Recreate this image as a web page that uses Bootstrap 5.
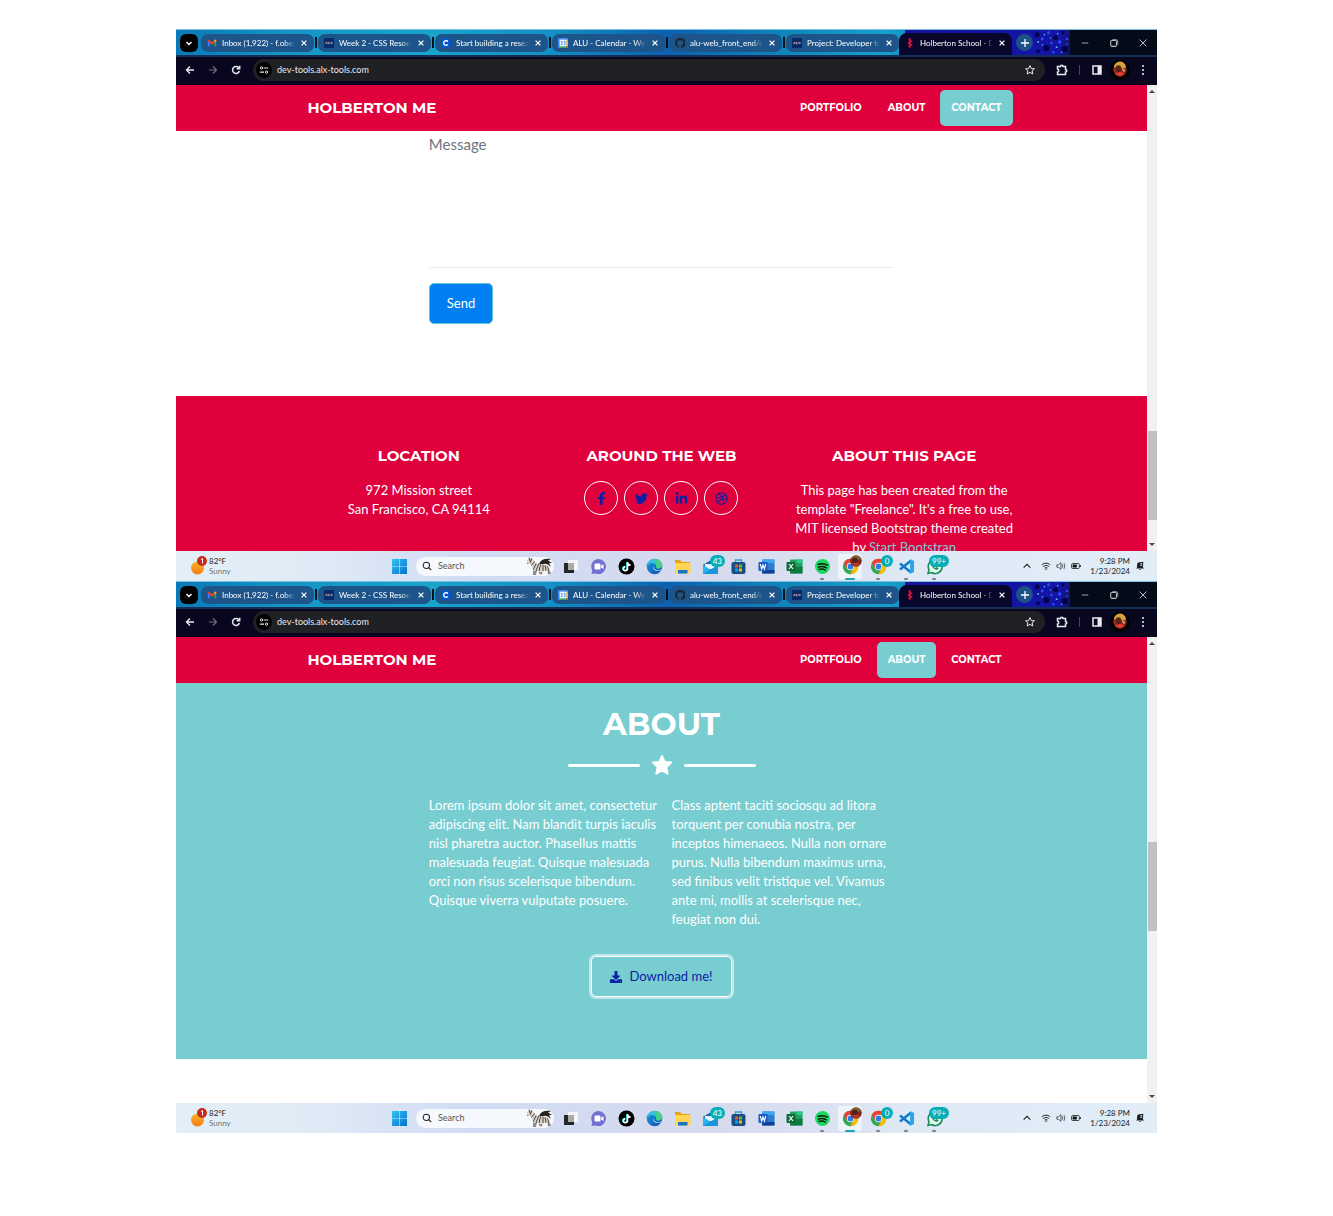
<!DOCTYPE html>
<html lang="en">
<head>
<meta charset="utf-8">
<meta name="viewport" content="width=device-width, initial-scale=1">
<title>Holberton School - Developer tools</title>
<link href="https://cdn.jsdelivr.net/npm/bootstrap@5.3.0/dist/css/bootstrap.min.css" rel="stylesheet">
<style>
:root{--crimson:#e0003c;--teal:#78cdd1;--ink:#0b1fa6;--ui:Lato,"Noto Sans",sans-serif;--head:Montserrat,Inter,sans-serif}
body{font-family:Lato,sans-serif;font-size:13px;line-height:19px;background:#fff;color:#212529}
.shots{max-width:981px;padding-top:29px;padding-bottom:83px}
.ico{display:block;flex:none;width:12px;height:12px}
button{border:0;background:none;padding:0;color:inherit}
/* browser frame */
.tabstrip{height:26px;padding-left:4px;font:8px/12px var(--ui);color:#fff;border-top:1px solid #7cc0e0;
 background:linear-gradient(100deg,#0a78b8 0,#1496c4 12%,#19a4cc 26%,#1390c4 38%,#0c60b0 50%,#0f86bb 62%,#18a0cb 72%,#1793c5 74%,#14159a 74%,#1414a8 90%,#071018 92%,#03151a 100%)}
.menu-btn{width:18px;height:18px;border-radius:6px;background:#000;margin-right:3px}
.tab{flex:0 1 113px;min-width:0;height:18px;border-radius:7px;background:#1d5489;padding:0 6px;gap:5px}
.tab .label{flex:1;min-width:0;overflow:hidden;white-space:nowrap;-webkit-mask:linear-gradient(90deg,#000 85%,transparent);mask:linear-gradient(90deg,#000 85%,transparent)}
.tab .ico{width:10px;height:10px}
.tab .close{width:8px;height:8px}
.bar{flex:none;width:2px;height:11px;background:#02121f;margin:0 1px}
.tab.current{background:#08062a;height:22px;border-radius:8px 8px 0 0;align-self:flex-end;padding-bottom:2px}
.plus{width:17px;height:17px;border-radius:50%;background:#1c5288;margin-left:4px}
.spray{flex:1;height:25px}
.winctl{flex:none;width:87px;height:25px;background:#040a18;color:#b5bcc4}
.winctl .ico{width:10px;height:10px}
.toolbar{height:30px;background:#08071f;box-shadow:inset 0 2px #143059;padding:0 8px;color:#e8eaed;gap:11px}
.tools{gap:7px}
.ico.face{width:20px;height:20px}
.omnibox{flex:1;height:22px;border-radius:11px;background:#202124;padding:0 9px 0 3px}
.omnibox input{flex:1;min-width:0;background:none;border:0;outline:0;padding:0 0 0 5px;color:#e8eaed;font:9px/12px var(--ui)}
.site-info{width:16px;height:16px;border-radius:50%;background:#000}
.site-info .ico{width:10px;height:10px}
.split{width:1px;height:10px;background:#24527c}
.view{height:466px}
.page-pane{flex:1;min-width:0;overflow:hidden}
.scroller{flex:none;width:10px;background:#f1f1f1}
.scroller i{display:block;background:#c1c1c1;flex:89 0 0;width:9px}
.scroller .arrow{flex:none;background:none;width:0;height:0;border:3px solid transparent}
.arrow.up{border-bottom-color:#444!important;margin:2px 0 5px}
.arrow.down{border-top-color:#444!important;margin:5px 0 2px}
.first .before{flex:335 0 0}.first .after{flex:18 0 0}
.second .before{flex:193 0 0}.second .after{flex:160 0 0}
/* page */
.wrap{max-width:728px;padding:0 10px;margin:0 auto}
.row.tight{--bs-gutter-x:20px}
.sitebar{height:46px;background:var(--crimson)}
.sitebar .brand{font:700 15px/24px var(--head);color:#fff;text-decoration:none}
.sitebar .site-link{font:700 10px/16px var(--head);color:#fff;text-decoration:none;border-radius:5px;padding:10px 11px;margin-right:4px}
.sitebar .site-link:last-child{margin-right:3px}
.sitebar .site-link.on{background:var(--teal)}
.contact{height:265px}
.contact textarea{display:block;width:100%;height:137px;border:0;border-bottom:1px solid #e9ecef;border-radius:0;padding:1px 0 0;font:15px/24px Lato,sans-serif;resize:none;outline:0}
.contact textarea::placeholder{color:#6c757d;opacity:1}
.send{margin-top:15px;height:41px;padding:0 17px;border:1px solid #5cc4d6;border-radius:5px;background:#0080f2;color:#fff;font-size:13px}
.foot{background:var(--crimson);color:#fff;padding-top:50px;text-align:center;min-height:155px}
.foot h4{font:700 15px/20px var(--head);margin:0 0 15px}
.foot .prose{margin:0}
.foot .prose a{color:var(--teal);text-decoration:none}
.socials{gap:6px}
.social{width:34px;height:34px;border:1px solid #fff;border-radius:50%;color:var(--ink)}
.social .ico{width:13px;height:13px}
.about{background:var(--teal);color:#fff;height:376px;padding-top:22px}
.about h2{font:700 31px/38px var(--head);margin:0;text-align:center}
.rule{gap:11px;margin:10px 0 19px}
.rule hr{width:72px;height:3px;border:0;border-radius:2px;background:#fff;opacity:1;margin:0}
.rule .ico{width:22px;height:24px}
.about p{margin:0}
.download{display:inline-flex;align-items:center;gap:7px;height:41px;padding:0 18px;margin-top:27px;border:1px solid #fff;border-radius:5px;box-shadow:0 0 0 2px #c2e7e9;color:var(--ink);text-decoration:none}
/* taskbar */
.taskbar{height:30px;display:grid;grid-template-columns:1fr auto 1fr;align-items:center;background:linear-gradient(90deg,#e3eff7 0,#dfeaf6 15%,#cfdcf3 30%,#d6daee 55%,#dfe8f5 75%,#e1eef8 100%);font:8px/10px var(--ui);color:#222}
.weather{padding-left:14px;gap:1px}
.weather .ico{width:18px;height:20px}
.cell{width:28px;height:27px;flex:none}
.cell .ico{width:17px;height:17px}
.find{width:138px;height:19px;border-radius:10px;background:#f5f8fd;padding:0 1px 0 6px;margin:0 2px 0 3px;gap:6px}
.find input{flex:1;min-width:0;border:0;background:none;padding:0;outline:0;font:9px/12px var(--ui)}
.find input::placeholder{color:#555;opacity:1}
.find .lens{width:10px;height:10px}
.find .zebra{width:28px;height:18px}
.count{position:absolute;top:2px;right:-1px;min-width:12px;height:12px;padding:0 3px;border-radius:6px;background:#08aeb7;color:#fff;font:8px/12px var(--ui);text-align:center}
.cell .ico.mini{position:absolute;top:2px;right:2px;width:12px;height:12px}
.live::after{content:"";position:absolute;left:12px;bottom:0;width:4px;height:2px;border-radius:1px;background:#7b7f88}
.live.front::after{left:9px;width:10px;background:#19a9b4}
.front::before{content:"";position:absolute;inset:1px 2px;border-radius:3px;background:#eff4fb;z-index:-1}
.cells{isolation:isolate}
.tray{gap:5px;padding-right:12px}
.tray .ico{width:10px;height:10px}
</style>
</head>
<body>
<svg class="position-absolute" width="0" height="0" aria-hidden="true">
<defs>
<linearGradient id="g-win" x2="1" y2="1"><stop stop-color="#30c4f4"/><stop offset="1" stop-color="#0672cf"/></linearGradient>
<linearGradient id="g-edge" x2="1" y2="1"><stop stop-color="#1b9de2"/><stop offset="1" stop-color="#0b4fa8"/></linearGradient>
<linearGradient id="g-sun" x2="0" y2="1"><stop stop-color="#ffb52a"/><stop offset="1" stop-color="#f07d12"/></linearGradient>
<clipPath id="zebra-body"><path d="M2 3l2-2.500L8 2l3 4.500 7 1 4 1 3 3 1 6h-3l-1-4-5 1 .5 3h-3l-1-4-2 1v3.500H8L8 12 6 7.500 2 7z"/></clipPath>
<symbol id="x" viewBox="0 0 10 10"><path d="M2 2l6 6M8 2l-6 6" stroke="currentColor" stroke-width="1.6"/></symbol>
<symbol id="xthin" viewBox="0 0 10 10"><path d="M1.500 1.500l7 7M8.500 1.500l-7 7" stroke="currentColor" stroke-width="1"/></symbol>
<symbol id="chev" viewBox="0 0 12 12"><path d="M3.500 5L6 7.500 8.500 5" fill="none" stroke="currentColor" stroke-width="1.500"/></symbol>
<symbol id="up" viewBox="0 0 12 12"><path d="M2 8l4-4 4 4" fill="none" stroke="currentColor" stroke-width="1.300"/></symbol>
<symbol id="gmail" viewBox="0 0 12 12"><path d="M1 10V3l2 1.500V10z" fill="#4285f4"/><path d="M9 10V4.500L11 3v7z" fill="#34a853"/><path d="M1 2.500l1.500-.5L6 5l3.500-3 1.500.5V4L6 8 1 4z" fill="#ea4335"/><path d="M9 4V2.200h2V4L9 5.500z" fill="#fbbc04"/></symbol>
<symbol id="alx" viewBox="0 0 12 12"><path fill="#052b68" d="M0 0h12v12H0z"/><path d="M2 7l1-2 1 2M5.500 5v2h1M8 5l2 2M10 5L8 7" stroke="#fff" stroke-width=".8" fill="none"/><path d="M2 5h8" stroke="#e0354b" stroke-width=".6"/></symbol>
<symbol id="cour" viewBox="0 0 12 12"><circle cx="6" cy="6" r="6" fill="#0056d2"/><path d="M8.300 4.300a2.800 2.800 0 1 0 0 3.400" fill="none" stroke="#fff" stroke-width="1.700"/></symbol>
<symbol id="cal" viewBox="0 0 12 12"><path fill="#4285f4" d="M0 0h12v12H0z"/><path fill="#fbbc04" d="M10 2h2v8h-2z"/><path fill="#34a853" d="M2 10h8v2H2z"/><path fill="#ea4335" d="M10 10h2l-2 2z"/><path fill="#fff" d="M2 2h8v8H2z"/><path d="M3 4h2v1.700H3.700M5 5.700V8H3M6.500 4h2v1.700H7.200M8.500 5.700V8h-2" fill="none" stroke="#4285f4" stroke-width=".9"/></symbol>
<symbol id="git" viewBox="0 0 16 16"><path fill="#1d2733" d="M8 0C3.580 0 0 3.580 0 8c0 3.540 2.290 6.530 5.470 7.590.4.070.55-.17.55-.38v-1.500c-2.010.37-2.530-.49-2.690-.94-.36-.92-1.100-1.300-.5-1.500.8-.2 1.300.6 1.600 1 .6.900 1.400.8 1.800.6.070-.520.28-.870.510-1.070-1.780-.2-3.640-.89-3.640-3.950 0-.87.310-1.590.82-2.150-.08-.2-.36-1.020.08-2.120 0 0 .67-.21 2.200.82a7.600 7.600 0 0 1 4 0c1.530-1.040 2.200-.82 2.200-.82.44 1.100.16 1.920.08 2.120.51.560.82 1.270.82 2.150 0 3.070-1.870 3.750-3.650 3.950.29.250.54.730.54 1.480v2.200c0 .210.150.460.550.380A8 8 0 0 0 8 0"/></symbol>
<symbol id="holb" viewBox="0 0 12 12"><path d="M6 0v12M4 2l4 2-4 2 4 2-4 2" fill="none" stroke="#e8153f" stroke-width="1.400"/></symbol>
<symbol id="plus" viewBox="0 0 12 12"><path d="M6 2v8M2 6h8" stroke="currentColor" stroke-width="1.300"/></symbol>
<symbol id="min" viewBox="0 0 12 12"><path d="M2 6h8" stroke="currentColor"/></symbol>
<symbol id="max" viewBox="0 0 12 12"><rect x="2" y="3" width="7" height="7" rx="1.500" fill="none" stroke="currentColor" stroke-width="1.300"/><path d="M4 2h5q1.500 0 1.500 2v4" fill="none" stroke="currentColor"/></symbol>
<symbol id="back" viewBox="0 0 12 12"><path d="M10 6H2.500M6 2.500L2.500 6 6 9.500" fill="none" stroke="currentColor" stroke-width="1.400"/></symbol>
<symbol id="fwd" viewBox="0 0 12 12"><path d="M2 6h7.500M6 2.500L9.500 6 6 9.500" fill="none" stroke="#70707c" stroke-width="1.200"/></symbol>
<symbol id="reload" viewBox="0 0 12 12"><path d="M9 4A3.500 3.500 0 1 0 9.400 7M9.700 1.700V4.700H6.700" fill="none" stroke="currentColor" stroke-width="1.500"/></symbol>
<symbol id="tune" viewBox="0 0 12 12"><path d="M5.500 3.500H11M1 8.500h5" stroke="currentColor" stroke-width="1.300"/><g fill="none" stroke="currentColor" stroke-width="1.200"><circle cx="3" cy="3.500" r="1.400"/><circle cx="9" cy="8.500" r="1.400"/></g></symbol>
<symbol id="staro" viewBox="0 0 12 12"><path d="M6 1.600l1.300 2.900 3.100.3-2.300 2.100.7 3.100L6 8.400l-2.800 1.600.7-3.100-2.300-2.100 3.100-.3z" fill="none" stroke="currentColor" stroke-width="1"/></symbol>
<symbol id="puzzle" viewBox="0 0 12 12"><path d="M1.500 2.500h3a1.300 1.300 0 0 1 2.600 0H9.500V5.500a1.300 1.300 0 0 1 0 2.600V10.500h-8V8.200a1.700 1.700 0 0 0 0-3.300z" fill="none" stroke="currentColor" stroke-width="1.500"/></symbol>
<symbol id="panel" viewBox="0 0 12 12"><path d="M2 2h8v8H2z" fill="none" stroke="currentColor" stroke-width="1.500"/><path d="M6.500 2H10v8H6.500z" fill="currentColor"/></symbol>
<symbol id="face" viewBox="0 0 20 20"><circle cx="10" cy="10" r="10" fill="#000"/><circle cx="10" cy="10" r="6.500" fill="#a82a1e"/><path d="M4 8a6 6 0 0 1 12-1l-3 2-5-3z" fill="#d6a23c"/><ellipse cx="8.500" cy="9" rx="3" ry="3.800" fill="#572619"/><path d="M5 14q5-4 9 0l-4 2.500z" fill="#db3c30"/><path d="M12 9l3 1-1 2z" fill="#e9c6ae"/></symbol>
<symbol id="minface" viewBox="0 0 12 12"><circle cx="6" cy="6" r="5.800" fill="#7c2a1d"/><path d="M1 4a5.500 5.500 0 0 1 10 0L8 5 5 3z" fill="#7d6431"/><ellipse cx="5" cy="5.500" rx="2.500" ry="3" fill="#4c2219"/><path d="M2 9q4-3 8 0l-4 2.500z" fill="#c93427"/></symbol>
<symbol id="dots" viewBox="0 0 12 12"><g fill="currentColor"><circle cx="6" cy="2" r="1.100"/><circle cx="6" cy="6" r="1.100"/><circle cx="6" cy="10" r="1.100"/></g></symbol>
<symbol id="fb" viewBox="0 0 320 512"><path fill="currentColor" d="M279 288l14-93h-89v-60c0-25 12-50 52-50h41V6s-37-6-72-6c-73 0-121 44-121 125v70H23v93h81v224h100V288z"/></symbol>
<symbol id="tw" viewBox="0 0 512 512"><path fill="currentColor" d="M459 152c0 5 0 9 0 14 0 138-105 298-298 298-59 0-114-17-161-47 8 1 16 1 25 1 49 0 94-16 130-45-46-1-85-31-98-72 7 1 13 2 20 2 9 0 19-1 28-4-48-10-84-52-84-103v-1c14 8 30 13 47 13-28-19-47-51-47-87 0-19 5-37 14-53 52 64 129 105 216 110-2-8-3-16-3-24 0-58 47-105 105-105 30 0 57 13 77 33 24-5 46-13 66-25-8 24-24 45-46 58 21-2 42-8 60-16-14 21-31 39-51 53z"/></symbol>
<symbol id="li" viewBox="0 0 448 512"><path fill="currentColor" d="M100 448H7V149h93zM54 108a54 54 0 1 1 0-108 54 54 0 0 1 0 108zM448 448h-93V302c0-34-1-79-48-79-49 0-56 38-56 77v148h-93V149h89v41h1c13-24 43-48 88-48 94 0 112 62 112 142z"/></symbol>
<symbol id="dr" viewBox="0 0 16 16"><g fill="none" stroke="currentColor" stroke-width="1.300"><circle cx="8" cy="8" r="7"/><path d="M5 2q5 6 6 12M1.500 7q8 .5 11.500-4M3.500 13Q7 7 15 8.500"/></g></symbol>
<symbol id="star" viewBox="0 0 24 24"><path fill="#fff" stroke="#fff" stroke-width="2" stroke-linejoin="round" d="M12 2l2.900 6.500 7.100.8-5.200 4.900L18.200 21.500 12 18l-6.200 3.500 1.400-7.300L2 9.300l7.100-.8z"/></symbol>
<symbol id="dl" viewBox="0 0 512 512"><path fill="currentColor" d="M216 0h80c13 0 24 11 24 24v168h88c18 0 27 22 14 34L270 378c-8 8-20 8-28 0L90 226c-13-12-4-34 14-34h88V24c0-13 11-24 24-24zM512 376v112c0 13-11 24-24 24H24c-13 0-24-11-24-24V376c0-13 11-24 24-24h147l49 49c20 20 52 20 72 0l49-49h147c13 0 24 11 24 24zM388 464a20 20 0 1 0-40 0 20 20 0 0 0 40 0zm64 0a20 20 0 1 0-40 0 20 20 0 0 0 40 0z"/></symbol>
<symbol id="weather" viewBox="0 0 18 20"><circle cx="7.500" cy="12" r="6.500" fill="url(#g-sun)"/><circle cx="12" cy="5" r="5" fill="#c42b1c"/><path d="M11 3.500l1.500-1v5" fill="none" stroke="#fff"/></symbol>
<symbol id="win" viewBox="0 0 17 17"><path fill="url(#g-win)" d="M1 1h7.200v7.200H1zM8.800 1H16v7.200H8.800zM1 8.800h7.200V16H1zM8.800 8.800H16V16H8.800z"/></symbol>
<symbol id="search" viewBox="0 0 12 12"><circle cx="5.200" cy="5.200" r="3.800" fill="none" stroke="#222" stroke-width="1.300"/><path d="M8 8l3 3" stroke="#222" stroke-width="1.400"/></symbol>
<symbol id="zebra" viewBox="0 0 28 18"><g clip-path="url(#zebra-body)"><path fill="#d9d4cc" d="M0 0h28v18H0z"/><path d="M1 5l2 3M4 0l1 4M7 1L5 6M10 4l-4 5M12 5l-4 8M14 6l-3 8M16 6l-2 8M18 6v8M20 7l1 7M22 7l2 8M8 15h4M14 16h5M22 16h5M8 17h3" stroke="#4a423b" stroke-width="1"/></g><path d="M14 7q2-6 12-5l-3 1.500 4 2.500-3 0 2 4q-4-4-7-3z" fill="#27221f"/></symbol>
<symbol id="task" viewBox="0 0 17 17"><path fill="#f7f7f7" d="M6 2h10v10H6z"/><path fill="#262626" d="M2 5h10v10H2z"/><path fill="#aaa" d="M6 5h6v7H6z"/></symbol>
<symbol id="teams" viewBox="0 0 17 17"><path fill="#7370d2" d="M8.500 1a7.500 7.500 0 1 1-3 14.400L1.500 16l.7-3.800A7.500 7.500 0 0 1 8.500 1z"/><rect x="4.500" y="5.500" width="6" height="6" rx="1" fill="#fff"/><path fill="#fff" d="M11 8l2.500-2v5L11 9.500z"/></symbol>
<symbol id="tik" viewBox="0 0 17 17"><circle cx="8.500" cy="8.500" r="8" fill="#000"/><path d="M9 4v6.500a2 2 0 1 1-2-2M9 4q.5 2.500 3 3" fill="none" stroke="#25f4ee" stroke-width="1.600"/><path d="M9.500 4.300v6.500a2 2 0 1 1-2-2M9.500 4.300q.5 2.500 3 3" fill="none" stroke="#fff" stroke-width="1.500"/></symbol>
<symbol id="edge" viewBox="0 0 17 17"><circle cx="8.500" cy="8.500" r="7.800" fill="url(#g-edge)"/><path fill="#45cf8c" d="M3 3.500c5-5 13-2 13.300 4 .1 3-4 4-6.300 2.500 1-3-1-5-4-5z"/><path fill="#35c1e8" d="M1 8q1-6 7-7l2 4Q5 3 1 8z"/><path fill="#cfe3f7" d="M8 7.500c-1.500 3 2 6 7 4l-.5.900c-5 1.600-9-1.400-6.500-4.900z"/></symbol>
<symbol id="files" viewBox="0 0 17 17"><path fill="#e8a317" d="M1 2h5l2 2h8v5H1z"/><path fill="#ffd457" d="M1 5h15.500v10.500H1z"/><path fill="#1775c5" d="M4 12h9.500v3.500H4z"/></symbol>
<symbol id="mail" viewBox="0 0 17 17"><path fill="#0e63ac" d="M1 7l8-5 7 5v9H1z"/><path fill="#e8f6fd" d="M3 6h11v5H3z"/><path fill="#29b2ee" d="M1 7l8 5-8 4z"/><path fill="#1c94db" d="M16 7L1 16h15z"/></symbol>
<symbol id="store" viewBox="0 0 17 17"><path d="M5.500 5V2h6v3" fill="none" stroke="#2a9fd8" stroke-width="1.300"/><rect x="1.500" y="4" width="14" height="12" rx="2" fill="#174e83"/><path fill="#f25022" d="M5 6.500h3v3H5z"/><path fill="#7fba00" d="M9 6.500h3v3H9z"/><path fill="#00a4ef" d="M5 10.500h3v3H5z"/><path fill="#ffb900" d="M9 10.500h3v3H9z"/></symbol>
<symbol id="word" viewBox="0 0 17 17"><rect x="4" y="1.500" width="12.500" height="14" rx="1" fill="#2b7cd3"/><path fill="#41a5ee" d="M4 1.500h12.500V5H4z"/><path fill="#103f91" d="M4 12h12.500v3.500H4z"/><rect x=".5" y="4" width="9" height="9" rx="1" fill="#185abd"/><path d="M2.300 6l1.300 5L5 7l1.400 4 1.300-5" fill="none" stroke="#fff" stroke-width="1.100"/></symbol>
<symbol id="excel" viewBox="0 0 17 17"><rect x="4" y="1.500" width="12.500" height="14" rx="1" fill="#21a366"/><path fill="#107c41" d="M4 8.500h12.500v7H4z"/><path fill="#33c481" d="M10.500 1.500h6V5h-6z"/><rect x=".5" y="4" width="9" height="9" rx="1" fill="#0d6b38"/><path d="M3 6l4 5M7 6l-4 5" stroke="#fff" stroke-width="1.200"/></symbol>
<symbol id="spot" viewBox="0 0 17 17"><circle cx="8.500" cy="8.500" r="7.500" fill="#1ed760"/><path d="M4 6.300q5-1.500 9.300.9M4.500 9q4-1.200 7.800.8M5 11.400q3.300-.9 6.300.7" fill="none" stroke="#07160b" stroke-width="1.400" stroke-linecap="round"/></symbol>
<symbol id="chrome" viewBox="0 0 17 17"><circle cx="8.500" cy="8.500" r="7.700" fill="#34a853"/><path fill="#ea4335" d="M1.800 4.700a7.700 7.700 0 0 1 13.400 0l-6.700.2L5 10.500z"/><path fill="#fbbc04" d="M15.200 4.700a7.700 7.700 0 0 1-6.900 11.500l3.500-6L8.500 4.700z"/><circle cx="8.500" cy="8.500" r="3.700" fill="#fff"/><circle cx="8.500" cy="8.500" r="2.900" fill="#2d7be8"/></symbol>
<symbol id="code" viewBox="0 0 17 17"><path d="M12.500 3L2 11.500M2 5.500L12.500 14" stroke="#127bc9" stroke-width="2.500"/><path fill="#2aa5ee" d="M12 1l4 2v11l-4 2z"/></symbol>
<symbol id="wa" viewBox="0 0 17 17"><path d="M2 15.500l1-3.700A7 7 0 1 1 5.500 14.500z" fill="#e7f7ee" stroke="#138a55" stroke-width="1.500"/><path d="M5.500 5c-1 3 3 7.500 6.500 6.500l.5-1.500-2-1-1 1q-2-1-2.500-2.500l.8-.8-.8-2z" fill="#138a55"/></symbol>
<symbol id="wifi" viewBox="0 0 12 12"><path d="M1 4.500q5-4 10 0M2.600 6.500q3.400-2.800 6.800 0M4.300 8.500q1.700-1.500 3.400 0" fill="none" stroke="#222" stroke-width="1.100"/><circle cx="6" cy="9.800" r=".8"/></symbol>
<symbol id="vol" viewBox="0 0 12 12"><path d="M1 4.500h2L6 2v8L3 7.500H1zM7.500 4q1.300 2 0 4M9.500 2.500q2.300 3.500 0 7" fill="none" stroke="#333" stroke-width=".9"/></symbol>
<symbol id="batt" viewBox="0 0 12 12"><rect x=".7" y="3" width="9.300" height="6" rx="1.300" fill="none" stroke="#222"/><path d="M2 4.300h5v3.400H2zM10.500 5H12v2h-1.500z" fill="#111"/></symbol>
<symbol id="bell" viewBox="0 0 12 12"><path d="M1.500 9l1-1.500V4Q3 1 6 1.500L10 1 9.500 7.500 11 9zM4.500 10h3q-1.500 2-3 0z" fill="#1b1d20"/><path d="M6.500 3h2L6.500 5.500h2" fill="none" stroke="#fff" stroke-width=".8"/></symbol>
<symbol id="drops" viewBox="0 0 36 25"><g fill="#04034f"><circle cx="4" cy="5" r="2.500"/><circle cx="13" cy="18" r="3"/><circle cx="22" cy="8" r="2.200"/><circle cx="31" cy="19" r="3"/><circle cx="29" cy="3" r="1.800"/><circle cx="5" cy="21" r="1.700"/></g><g fill="#2c4fe6"><circle cx="9" cy="9" r="1.500"/><circle cx="18" cy="13" r="1.300"/><circle cx="26" cy="12" r="1.600"/><circle cx="20" cy="22" r="1.200"/><circle cx="33" cy="9" r="1.200"/><circle cx="15" cy="3" r="1.400"/></g><g fill="#63c3f0"><circle cx="5" cy="12" r=".9"/><circle cx="11" cy="5" r=".8"/><circle cx="17" cy="8" r=".7"/><circle cx="24" cy="4" r=".8"/><circle cx="23" cy="17" r=".9"/><circle cx="9" cy="15" r=".7"/><circle cx="28" cy="22" r=".7"/><circle cx="33" cy="14" r=".6"/></g></symbol>
</defs>
</svg>

<template id="frame-top">
<div class="tabstrip d-flex align-items-center">
<button class="menu-btn d-flex align-items-center justify-content-center flex-shrink-0" aria-label="Search tabs"><svg class="ico"><use href="#chev"/></svg></button>
<div class="tab d-flex align-items-center"><svg class="ico"><use href="#gmail"/></svg><span class="label">Inbox (1,922) - f.obed</span><button aria-label="Close"><svg class="ico close"><use href="#x"/></svg></button></div><span class="bar"></span>
<div class="tab d-flex align-items-center"><svg class="ico"><use href="#alx"/></svg><span class="label">Week 2 - CSS Resour</span><button aria-label="Close"><svg class="ico close"><use href="#x"/></svg></button></div><span class="bar"></span>
<div class="tab d-flex align-items-center"><svg class="ico"><use href="#cour"/></svg><span class="label">Start building a resea</span><button aria-label="Close"><svg class="ico close"><use href="#x"/></svg></button></div><span class="bar"></span>
<div class="tab d-flex align-items-center"><svg class="ico"><use href="#cal"/></svg><span class="label">ALU - Calendar - Wee</span><button aria-label="Close"><svg class="ico close"><use href="#x"/></svg></button></div><span class="bar"></span>
<div class="tab d-flex align-items-center"><svg class="ico"><use href="#git"/></svg><span class="label">alu-web_front_end/d</span><button aria-label="Close"><svg class="ico close"><use href="#x"/></svg></button></div><span class="bar"></span>
<div class="tab d-flex align-items-center"><svg class="ico"><use href="#alx"/></svg><span class="label">Project: Developer to</span><button aria-label="Close"><svg class="ico close"><use href="#x"/></svg></button></div>
<div class="tab current d-flex align-items-center"><svg class="ico"><use href="#holb"/></svg><span class="label">Holberton School - D</span><button aria-label="Close"><svg class="ico close"><use href="#x"/></svg></button></div>
<button class="plus d-flex align-items-center justify-content-center flex-shrink-0" aria-label="New tab"><svg class="ico"><use href="#plus"/></svg></button>
<svg class="spray" preserveAspectRatio="xMidYMid slice" viewBox="0 0 36 25"><use href="#drops"/></svg>
<div class="winctl d-flex align-items-center justify-content-around"><button aria-label="Minimize"><svg class="ico"><use href="#min"/></svg></button><button aria-label="Restore"><svg class="ico"><use href="#max"/></svg></button><button aria-label="Close window"><svg class="ico"><use href="#xthin"/></svg></button></div>
</div>
<div class="toolbar d-flex align-items-center">
<button aria-label="Back"><svg class="ico"><use href="#back"/></svg></button>
<button aria-label="Forward"><svg class="ico"><use href="#fwd"/></svg></button>
<button aria-label="Reload"><svg class="ico"><use href="#reload"/></svg></button>
<div class="omnibox d-flex align-items-center"><span class="site-info d-flex align-items-center justify-content-center"><svg class="ico"><use href="#tune"/></svg></span><input type="text" aria-label="Address" value="dev-tools.alx-tools.com"><button aria-label="Bookmark"><svg class="ico"><use href="#staro"/></svg></button></div>
<button aria-label="Extensions"><svg class="ico"><use href="#puzzle"/></svg></button>
<span class="split"></span>
<div class="tools d-flex align-items-center"><button aria-label="Side panel"><svg class="ico"><use href="#panel"/></svg></button>
<button aria-label="Profile"><svg class="ico face"><use href="#face"/></svg></button>
<button aria-label="Menu"><svg class="ico"><use href="#dots"/></svg></button></div>
</div>
</template>

<template id="frame-task">
<div class="weather d-flex align-items-center"><svg class="ico"><use href="#weather"/></svg><div>82°F<br><span class="text-secondary">Sunny</span></div></div>
<div class="cells d-flex align-items-center">
<button class="cell d-flex align-items-center justify-content-center" aria-label="Start"><svg class="ico"><use href="#win"/></svg></button>
<div class="find d-flex align-items-center"><svg class="ico lens"><use href="#search"/></svg><input type="search" placeholder="Search" aria-label="Search"><svg class="ico zebra"><use href="#zebra"/></svg></div>
</div>
<div class="tray d-flex align-items-center justify-content-end"><svg class="ico me-1"><use href="#up"/></svg><svg class="ico"><use href="#wifi"/></svg><svg class="ico"><use href="#vol"/></svg><svg class="ico"><use href="#batt"/></svg><div class="text-end ms-1">9:28 PM<br>1/23/2024</div><svg class="ico"><use href="#bell"/></svg></div>
</template>

<main class="shots container-fluid px-0 mx-auto">
<section class="first">
<div data-part="frame-top"></div>
<div class="view d-flex">
<div class="page-pane">
<nav class="sitebar"><div class="wrap d-flex align-items-center h-100"><a class="brand me-auto" href="#">HOLBERTON ME</a><a class="site-link" href="#">PORTFOLIO</a><a class="site-link" href="#">ABOUT</a><a class="site-link on" href="#">CONTACT</a></div></nav>
<form class="contact wrap"><div class="row tight justify-content-center"><div class="col-8"><textarea placeholder="Message" aria-label="Message"></textarea><button type="button" class="send">Send</button></div></div></form>
<footer class="foot"><div class="wrap"><div class="row tight">
<div class="col-4"><h4>LOCATION</h4><p class="prose">972 Mission street<br>San Francisco, CA 94114</p></div>
<div class="col-4"><h4>AROUND THE WEB</h4><div class="d-flex justify-content-center socials"><a class="social d-flex align-items-center justify-content-center" href="#" aria-label="Facebook"><svg class="ico"><use href="#fb"/></svg></a><a class="social d-flex align-items-center justify-content-center" href="#" aria-label="Twitter"><svg class="ico"><use href="#tw"/></svg></a><a class="social d-flex align-items-center justify-content-center" href="#" aria-label="LinkedIn"><svg class="ico"><use href="#li"/></svg></a><a class="social d-flex align-items-center justify-content-center" href="#" aria-label="Dribbble"><svg class="ico"><use href="#dr"/></svg></a></div></div>
<div class="col-4"><h4>ABOUT THIS PAGE</h4><p class="prose">This page has been created from the template "Freelance". It's a free to use, MIT licensed Bootstrap theme created by <a href="#">Start Bootstrap</a></p></div>
</div></div></footer>
</div>
<div class="scroller d-flex flex-column align-items-center"><i class="arrow up"></i><span class="before"></span><i></i><span class="after"></span><i class="arrow down"></i></div>
</div>
<div class="taskbar" data-part="frame-task"></div>
</section>
<section class="second">
<div data-part="frame-top"></div>
<div class="view d-flex">
<div class="page-pane">
<nav class="sitebar"><div class="wrap d-flex align-items-center h-100"><a class="brand me-auto" href="#">HOLBERTON ME</a><a class="site-link" href="#">PORTFOLIO</a><a class="site-link on" href="#">ABOUT</a><a class="site-link" href="#">CONTACT</a></div></nav>
<div class="about"><div class="wrap">
<h2>ABOUT</h2>
<div class="rule d-flex align-items-center justify-content-center"><hr><svg class="ico"><use href="#star"/></svg><hr></div>
<div class="row tight justify-content-center"><div class="col-4 pe-0"><p>Lorem ipsum dolor sit amet, consectetur adipiscing elit. Nam blandit turpis iaculis nisl pharetra auctor. Phasellus mattis malesuada feugiat. Quisque malesuada orci non risus scelerisque bibendum. Quisque viverra vulputate posuere.</p></div><div class="col-4"><p>Class aptent taciti sociosqu ad litora torquent per conubia nostra, per inceptos himenaeos. Nulla non ornare purus. Nulla bibendum maximus urna, sed finibus velit tristique vel. Vivamus ante mi, mollis at scelerisque nec, feugiat non dui.</p></div></div>
<div class="text-center"><a class="download" href="#"><svg class="ico"><use href="#dl"/></svg>Download me!</a></div>
</div></div>
</div>
<div class="scroller d-flex flex-column align-items-center"><i class="arrow up"></i><span class="before"></span><i></i><span class="after"></span><i class="arrow down"></i></div>
</div>
<div class="taskbar" data-part="frame-task"></div>
</section>
</main>
<script src="https://cdn.jsdelivr.net/npm/bootstrap@5.3.0/dist/js/bootstrap.bundle.min.js"></script>
<script>
document.querySelectorAll('[data-part]').forEach(function (slot) {
  slot.append(document.getElementById(slot.dataset.part).content.cloneNode(true));
});
// Pinned apps: icon, name, badge, state classes
var apps = [['task','Task view'],['teams','Chat'],['tik','TikTok'],['edge','Edge'],['files','File Explorer'],['mail','Mail','43'],['store','Store'],['word','Word'],['excel','Excel'],['spot','Spotify','','live'],['chrome','Chrome','','live front'],['chrome','Chrome','0','live'],['code','Code','','live'],['wa','WhatsApp','99+','live']];
document.querySelectorAll('.cells').forEach(function (row) {
  row.insertAdjacentHTML('beforeend', apps.map(function (a) {
    var front = a[3] === 'live front';
    return '<button class="cell position-relative d-flex align-items-center justify-content-center ' + (a[3] || '') + '" aria-label="' + a[1] + '"><svg class="ico"><use href="#' + a[0] + '"/></svg>' + (front ? '<svg class="ico mini"><use href="#minface"/></svg>' : '') + (a[2] ? '<span class="count">' + a[2] + '</span>' : '') + '</button>';
  }).join(''));
});
</script>
</body>
</html>
